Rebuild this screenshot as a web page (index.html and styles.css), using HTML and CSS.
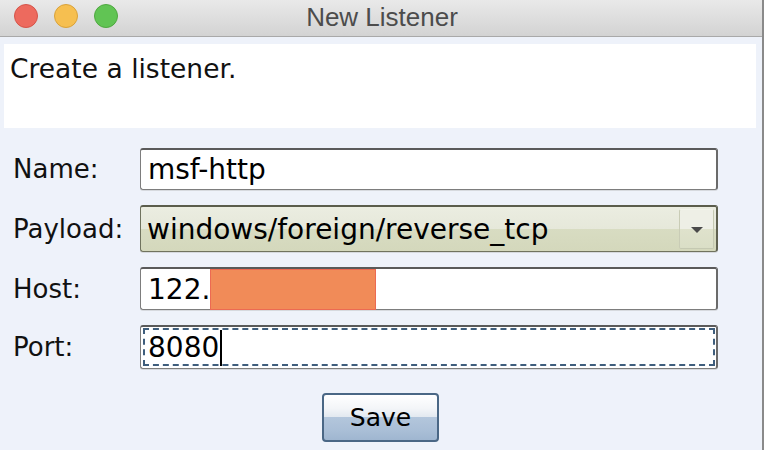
FILE: index.html
```html
<!DOCTYPE html>
<html>
<head>
<meta charset="utf-8">
<link rel="stylesheet" href="styles.css">
</head>
<body>
<div class="window">
  <div class="titlebar">
    <div class="lights">
      <span class="light red"></span>
      <span class="light yellow"></span>
      <span class="light green"></span>
    </div>
    <div class="title">New Listener</div>
  </div>
  <div class="content">
    <div class="desc">Create a listener.</div>
    <div class="form">
      <label class="label">Name:</label>
      <div class="field name">msf-http</div>
      <label class="label">Payload:</label>
      <div class="combo">
        <span class="combo-text">windows/foreign/reverse_tcp</span>
        <span class="combo-btn"><span class="tri"></span></span>
      </div>
      <label class="label">Host:</label>
      <div class="field host">122.<span class="redact"></span></div>
      <label class="label">Port:</label>
      <div class="field port focus">8080<span class="caret"></span></div>
    </div>
    <div class="actions">
      <button class="btn">Save</button>
    </div>
  </div>
</div>
</body>
</html>
```
FILE: styles.css
```css
html, body {
  margin: 0;
  padding: 0;
  background: #eef2fa;
}
body {
  width: 764px;
  height: 450px;
  overflow: hidden;
  font-family: "DejaVu Sans", "Noto Sans", sans-serif;
}
.window {
  width: 762px;
  height: 450px;
  border-right: 2px solid #8a8a8a;
  background: #eef2fa;
  display: flex;
  flex-direction: column;
}
.titlebar {
  height: 36px;
  border-bottom: 1px solid #a9a9a9;
  background: linear-gradient(#e9e9e9, #d3d3d3);
  position: relative;
  display: flex;
  align-items: center;
  justify-content: center;
}
.lights {
  position: absolute;
  left: 14px;
  top: 4px;
  display: flex;
  gap: 16px;
}
.light {
  width: 24px;
  height: 24px;
  border-radius: 50%;
  box-sizing: border-box;
}
.red { background: #ed6a5e; border: 1px solid #d55449; }
.yellow { background: #f6bf50; border: 1px solid #d9a23a; }
.green { background: #61c454; border: 1px solid #4fa840; }
.title {
  font-family: "Liberation Sans", Arial, sans-serif;
  font-size: 26px;
  color: #4c4c4c;
  margin-left: 2px;
  margin-top: -1px;
}
.content {
  padding: 7px 6px 0 4px;
  display: flex;
  flex-direction: column;
}
.desc {
  background: #fff;
  height: 84px;
  box-sizing: border-box;
  padding: 9px 0 0 6px;
  font-size: 26.5px;
  color: #111;
}
.form {
  margin-top: 20px;
  display: grid;
  grid-template-columns: 136px 578px;
  grid-template-rows: 42px 47px 43px 44px;
  row-gap: 15px;
  align-items: center;
}
.label {
  padding-left: 9px;
  font-size: 26px;
  color: #111;
}
.field {
  height: 100%;
  box-sizing: border-box;
  background: #fff;
  border: 1px solid #7d7d7d;
  border-top: 2px solid #5a5a5a;
  border-right: 2px solid #6a6a6a;
  border-radius: 3px;
  box-shadow: 0 1px 0 #d6d9de;
  display: flex;
  align-items: center;
  padding-left: 7px;
  font-size: 28px;
  color: #000;
  position: relative;
}
.redact {
  width: 166px;
  height: 41px;
  box-sizing: border-box;
  background: #f18b58;
  border: 1px solid #ec6a52;
  align-self: flex-start;
}
.focus {
  outline: 2px dashed #3f5e7d;
  outline-offset: -5px;
}
.caret {
  width: 2px;
  height: 36px;
  background: #000;
  margin-left: 1px;
}
.combo {
  height: 100%;
  box-sizing: border-box;
  border: 1px solid #70735e;
  border-top: 2px solid #5b5d4c;
  border-right: 2px solid #5f6150;
  border-radius: 3px;
  background: linear-gradient(#ebede1 0, #e6e8da 50%, #d8dcc2 50%, #d4d8bc 100%);
  display: flex;
  align-items: center;
  justify-content: space-between;
  padding-left: 6px;
  font-size: 28px;
  color: #000;
  box-shadow: 0 1px 0 #d6d9de;
}
.combo-btn {
  width: 35px;
  height: 40px;
  margin-right: 2px;
  box-sizing: border-box;
  border: 1px solid #c5c9b2;
  border-top-color: #f2f3ea;
  border-left-color: #c9ccb6;
  background: linear-gradient(#eeefe6 0, #eeefe6 50%, #dfe2cc 50%, #dadec6 100%);
  border-radius: 2px;
  display: flex;
  align-items: center;
  justify-content: center;
}
.tri {
  width: 0;
  height: 0;
  border-left: 6px solid transparent;
  border-right: 6px solid transparent;
  border-top: 6px solid #4a4a4a;
  margin-top: 2px;
}
.actions {
  display: flex;
  justify-content: center;
  padding-top: 24px;
  padding-right: 1px;
}
.btn {
  width: 117px;
  height: 49px;
  box-sizing: border-box;
  border: 2px solid #4a6785;
  border-radius: 4px;
  background: linear-gradient(#ffffff 0, #f3f5f8 30%, #e3e9f0 48%, #b3c6dc 50%, #a9bed6 80%, #9fb6d0 100%);
  font-family: "DejaVu Sans", "Noto Sans", sans-serif;
  font-size: 25px;
  color: #000;
  padding: 0;
  margin-left: 2px;
}
```
